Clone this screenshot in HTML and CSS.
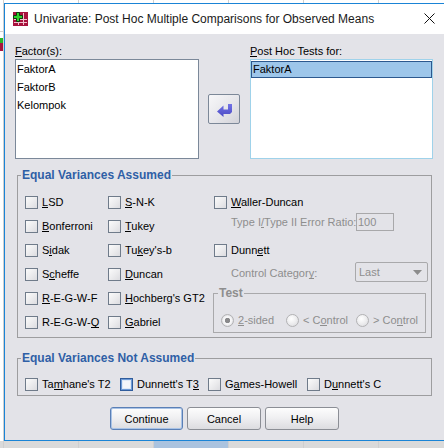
FILE: index.html
```html
<!DOCTYPE html>
<html>
<head>
<meta charset="utf-8">
<link rel="stylesheet" href="styles.css">
</head>
<body>
<div class="dialog">
  <div class="titlebar">
    <svg class="appicon" width="15" height="14" viewBox="0 0 15 14">
      <rect width="15" height="14" fill="#a8123d"/>
      <path d="M1 7.5h13M1 10.5h13M5.5 4v9M10.5 1v12" stroke="#f1c2cf" stroke-width="1"/>
      <path d="M3.5 0.5h3v3h3v3h-3v3h-3v-3h-3v-3h3z" fill="#2fd02f" stroke="#103810" stroke-width="1"/>
    </svg>
    <span class="title">Univariate: Post Hoc Multiple Comparisons for Observed Means</span>
    <svg class="close" width="11" height="11" viewBox="0 0 11 11">
      <path d="M0.5 0.5L10.5 10.5M10.5 0.5L0.5 10.5" stroke="#111" stroke-width="1"/>
    </svg>
  </div>
  <div class="content">
    <div class="lists">
      <div class="lbl lbl-left"><span class="mn">F</span>actor(s):</div>
      <div class="lbl lbl-right"><span class="mn">P</span>ost Hoc Tests for:</div>
      <div class="listbox factors">
        <div class="item">FaktorA</div>
        <div class="item">FaktorB</div>
        <div class="item">Kelompok</div>
      </div>
      <div class="movecol">
        <div class="move">
          <svg width="16" height="13" viewBox="0 0 16 13">
            <defs>
              <linearGradient id="ag" x1="0" y1="0" x2="0" y2="1">
                <stop offset="0" stop-color="#7272e6"/>
                <stop offset="1" stop-color="#4b4bc4"/>
              </linearGradient>
            </defs>
            <polygon points="0,7.5 6.5,1.5 6.5,5.5 11,5.5 11,0 15,0 15,8 13,10 6.5,10 6.5,13" fill="url(#ag)"/>
          </svg>
        </div>
      </div>
      <div class="listbox targets">
        <div class="item sel">FaktorA</div>
      </div>
    </div>

    <fieldset class="group g1">
      <legend>Equal Variances Assumed</legend>
      <div class="g1-body">
        <div class="col c1">
          <div class="row"><span class="cb"></span><span><span class="mn">L</span>SD</span></div>
          <div class="row"><span class="cb"></span><span><span class="mn">B</span>onferroni</span></div>
          <div class="row"><span class="cb"></span><span>S<span class="mn">i</span>dak</span></div>
          <div class="row"><span class="cb"></span><span>S<span class="mn">c</span>heffe</span></div>
          <div class="row"><span class="cb"></span><span><span class="mn">R</span>-E-G-W-F</span></div>
          <div class="row"><span class="cb"></span><span>R-E-G-W-<span class="mn">Q</span></span></div>
        </div>
        <div class="col c2">
          <div class="row"><span class="cb"></span><span><span class="mn">S</span>-N-K</span></div>
          <div class="row"><span class="cb"></span><span><span class="mn">T</span>ukey</span></div>
          <div class="row"><span class="cb"></span><span>Tu<span class="mn">k</span>ey's-b</span></div>
          <div class="row"><span class="cb"></span><span><span class="mn">D</span>uncan</span></div>
          <div class="row"><span class="cb"></span><span><span class="mn">H</span>ochberg's GT2</span></div>
          <div class="row"><span class="cb"></span><span><span class="mn">G</span>abriel</span></div>
        </div>
        <div class="col c3">
          <div class="row"><span class="cb"></span><span><span class="mn">W</span>aller-Duncan</span></div>
          <div class="ratio">
            <span class="dis ratio-lbl">Type I<span class="mn">/</span>Type II Error Ratio:</span>
            <span class="field">100</span>
          </div>
          <div class="row dunnett"><span class="cb"></span><span>Dunn<span class="mn">e</span>tt</span></div>
          <div class="ctrl">
            <span class="dis ctrl-lbl">Control Categor<span class="mn">y</span>:</span>
            <span class="dd">Last
              <svg class="ddarrow" width="9" height="5" viewBox="0 0 9 5"><polygon points="0,0 9,0 4.5,5" fill="#8c8c8c"/></svg>
            </span>
          </div>
          <fieldset class="test">
            <legend>Test</legend>
            <div class="test-body">
              <div class="ritem r1"><span class="rb on"></span><span class="dis"><span class="mn">2</span>-sided</span></div>
              <div class="ritem r2"><span class="rb"></span><span class="dis">&lt; C<span class="mn">o</span>ntrol</span></div>
              <div class="ritem r3"><span class="rb"></span><span class="dis">&gt; Co<span class="mn">n</span>trol</span></div>
            </div>
          </fieldset>
        </div>
      </div>
    </fieldset>

    <fieldset class="group g2">
      <legend>Equal Variances Not Assumed</legend>
      <div class="g2-body">
        <div class="row w1"><span class="cb"></span><span>Ta<span class="mn">m</span>hane's T2</span></div>
        <div class="row w2"><span class="cb focus"></span><span>Dunnett's T<span class="mn">3</span></span></div>
        <div class="row w3"><span class="cb"></span><span>G<span class="mn">a</span>mes-Howell</span></div>
        <div class="row w4"><span class="cb"></span><span>D<span class="mn">u</span>nnett's C</span></div>
      </div>
    </fieldset>

    <div class="buttons">
      <div class="btn default">Continue</div>
      <div class="btn">Cancel</div>
      <div class="btn">Help</div>
    </div>
  </div>
</div>
</body>
</html>
```

FILE: styles.css
```css
html, body {
  margin: 0;
  padding: 0;
}
body {
  width: 444px;
  height: 448px;
  overflow: hidden;
  font-family: "Liberation Sans", Arial, sans-serif;
  font-size: 11px;
  color: #000;
  background:
    linear-gradient(#27b827, #27b827) 0 38px / 3px 5px no-repeat,
    linear-gradient(#a8123d, #a8123d) 0 43px / 3px 8px no-repeat,
    linear-gradient(#d0d0d0, #d0d0d0) 0 31px / 4px 1px no-repeat,
    repeating-linear-gradient(to right, #cfcfcf 0 1px, transparent 1px 75px) 3px 0 / 100% 100%,
    linear-gradient(#aac3df, #aac3df) 154px 441px / 74px 7px no-repeat,
    linear-gradient(#dadada, #dadada) 0 441px / 100% 7px no-repeat,
    #ffffff;
}

/* mnemonic underline: only under the one letter */
.mn {
  text-decoration: none;
  background: linear-gradient(currentColor, currentColor) 0 11px / 100% 1px no-repeat;
}

.dialog {
  margin: 3px 0 0 4px;
  width: 440px;
  height: 438px;
  box-sizing: border-box;
  border: 1px solid #1a84d6;
  border-right: none;
  background: #e3e3e8;
}

/* title bar */
.titlebar {
  height: 30px;
  background: #fff;
  display: flex;
  align-items: center;
  padding: 0 9px 0 8px;
}
.appicon {
  flex: none;
  margin-top: -1px;
}
.title {
  margin-left: 6px;
  font-size: 12px;
  color: #1a1a1a;
  white-space: nowrap;
  flex: 1;
  margin-top: -1px;
}
.close {
  flex: none;
  margin-top: -1px;
}

.content {
  padding: 11px 0 0 10px;
}

/* list area */
.lists {
  display: grid;
  grid-template-columns: 184px 51px 183px;
  grid-template-rows: 14px 100px;
}
.lbl {
  line-height: 13px;
  height: 14px;
  white-space: nowrap;
}
.lbl-left { grid-column: 1; grid-row: 1; }
.lbl-right { grid-column: 3; grid-row: 1; }
.listbox {
  grid-row: 2;
  box-sizing: border-box;
  height: 100px;
  background: #fff;
  padding-top: 1px;
}
.factors {
  grid-column: 1;
  border: 1px solid #7b8899;
}
.targets {
  grid-column: 3;
  border: 1px solid #9fd2ea;
}
.item {
  height: 17px;
  line-height: 17px;
  margin-bottom: 1px;
  padding-left: 1px;
  box-sizing: border-box;
}
.item.sel {
  background: #9dc6ea;
  border: 1px solid #2c588e;
  line-height: 15px;
  padding-left: 1px;
}
.movecol {
  grid-column: 2;
  grid-row: 2;
  display: flex;
  align-items: center;
  padding-left: 9px;
}
.move {
  width: 32px;
  height: 30px;
  box-sizing: border-box;
  border: 1px solid #7c8898;
  border-radius: 2px;
  background: linear-gradient(135deg, #f7f7f9 0%, #e6e6ea 55%, #d2d2d8 100%);
  display: flex;
  align-items: center;
  justify-content: center;
  padding: 2px 0 0 2px;
}

/* group boxes */
.group {
  margin: 9px 0 0 2px;
  width: 415px;
  box-sizing: border-box;
  border: 1px solid #9d9d9f;
  padding: 0;
  min-width: 0;
}
.group > legend {
  font-weight: bold;
  font-size: 12px;
  line-height: 14px;
  color: #2f5fa6;
  margin-left: 3px;
  padding: 0 1px;
}
.g1-body {
  display: flex;
  padding: 8px 0 3px 7px;
}
.c1 { width: 83px; }
.c2 { width: 106px; }
.c3 { width: 212px; }

.row {
  height: 24px;
  display: flex;
  align-items: center;
  white-space: nowrap;
}
.cb {
  flex: none;
  width: 13px;
  height: 13px;
  box-sizing: border-box;
  border: 1px solid #6f7b8a;
  background: linear-gradient(135deg, #fbfbfb 0%, #ececee 50%, #dcdce0 100%);
  margin-right: 4px;
}
.cb.focus {
  border: 1px solid #2f5c9c;
  box-shadow: inset 0 0 0 1px #6e9ad6, inset 0 0 0 2px #dfe9f6;
  background: #f4f6fa;
}

.dis {
  color: #8e8e8e;
}
.ratio {
  display: flex;
  align-items: center;
  height: 18px;
  margin-top: -1px;
  padding-left: 17px;
  white-space: nowrap;
}
.ratio-lbl {
  width: 125px;
  flex: none;
}
.field {
  width: 38px;
  height: 18px;
  box-sizing: border-box;
  border: 1px solid #a8a8aa;
  color: #8e8e8e;
  line-height: 16px;
  padding-left: 1px;
  flex: none;
}
.row.dunnett {
  margin-top: 7px;
}
.ctrl {
  display: flex;
  align-items: center;
  height: 20px;
  padding-left: 17px;
  white-space: nowrap;
}
.ctrl-lbl {
  width: 124px;
  flex: none;
  padding-top: 2px;
}
.dd {
  flex: none;
  width: 73px;
  height: 20px;
  box-sizing: border-box;
  border: 1px solid #a9a9ab;
  border-radius: 2px;
  color: #8e8e8e;
  display: flex;
  align-items: center;
  padding-left: 3px;
}
.ddarrow {
  margin-left: auto;
  margin-right: 5px;
}

.test {
  margin: 4px 0 0 -1px;
  width: 213px;
  box-sizing: border-box;
  border: 1px solid #a9a9ab;
  padding: 0;
  min-width: 0;
}
.test > legend {
  font-weight: bold;
  font-size: 12px;
  line-height: 14px;
  color: #8e8e8e;
  margin-left: 4px;
  padding: 0 1px;
}
.test-body {
  display: flex;
  height: 20px;
  padding: 10px 0 2px 7px;
}
.ritem {
  display: flex;
  align-items: center;
  white-space: nowrap;
}
.r1 { width: 65px; }
.r2 { width: 70px; }
.rb {
  flex: none;
  width: 13px;
  height: 13px;
  box-sizing: border-box;
  border-radius: 50%;
  border: 1px solid #b2b2b4;
  background: radial-gradient(circle at 40% 35%, #ffffff 0%, #ebebed 55%, #d6d6da 100%);
  margin-right: 4px;
}
.rb.on {
  background: radial-gradient(circle, #8a8a8c 0 2.4px, #f7f7f8 3px 3.8px, #dcdce0 6px);
}

.g2 {
  margin-top: 13px;
}
.g2-body {
  display: flex;
  padding: 8px 0 0 7px;
}
.g2-body .row { height: 22px; }
.w1 { width: 95px; }
.w2 { width: 88px; }
.w3 { width: 99px; }

.buttons {
  display: flex;
  gap: 4px;
  margin-top: 11px;
  padding-left: 95px;
}
.btn {
  height: 23px;
  width: 74px;
  box-sizing: border-box;
  border: 1px solid #8b8e95;
  border-radius: 3px;
  background: linear-gradient(#fdfdfd 0%, #f0f0f2 45%, #dcdce0 100%);
  display: flex;
  align-items: center;
  justify-content: center;
  font-size: 11px;
}
.btn.default {
  width: 73px;
  border-color: #5a7fb6;
  box-shadow: inset 0 0 0 1px #a9c3e6;
}
```
